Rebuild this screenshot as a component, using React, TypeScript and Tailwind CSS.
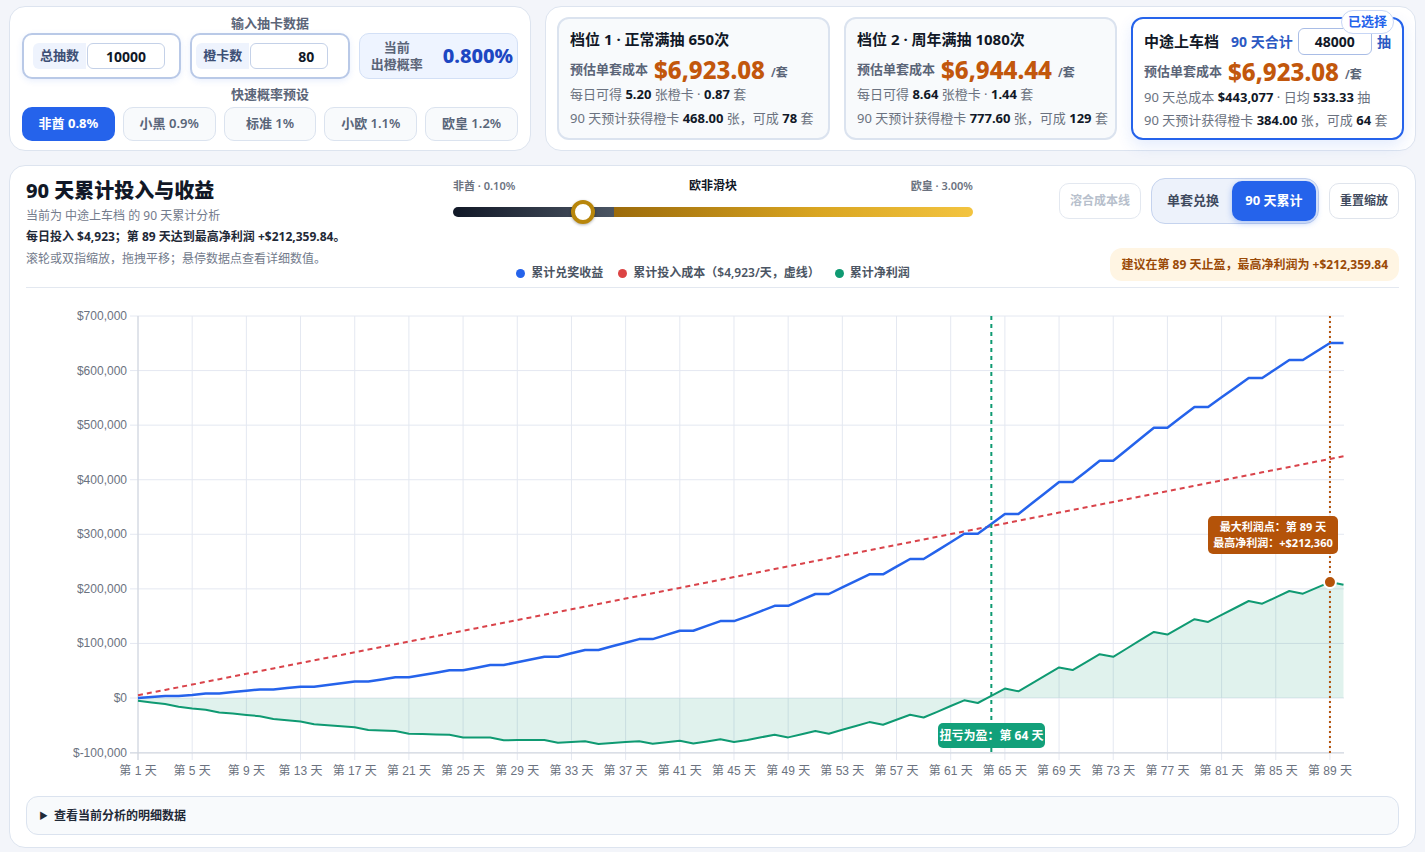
import React from 'react'

const DAILY = 4923

// revenue (k$) by completed sets, read off the curve
const TABLE: [number, number][] = [
  [0, 0], [3, 5.5], [6, 13.4], [9, 20.7], [12, 30], [14, 37.9], [17, 50.7], [19, 60.5],
  [22, 75.7], [24, 88], [27, 108], [29, 123.4], [32, 149.6], [34, 169], [36, 190.6],
  [39, 226.6], [41, 254.7], [44, 301], [46, 337.2], [49, 395.8], [51, 434.8], [54, 495.3],
  [56, 533.3], [59, 586.4], [61, 619.4], [63, 650.50784],
]

function revenueForSets(n: number) {
  for (let i = 1; i < TABLE.length; i++) {
    const [n1, v1] = TABLE[i]
    const [n0, v0] = TABLE[i - 1]
    if (n <= n1) return (v0 + ((n - n0) / (n1 - n0)) * (v1 - v0)) * 1000
  }
  return TABLE[TABLE.length - 1][1] * 1000
}

const points = Array.from({ length: 90 }, (_, i) => {
  const d = i + 1
  const sets = Math.floor((d * 533.33 * 0.008) / 6)
  const rev = revenueForSets(sets)
  const cost = DAILY * d
  return { d, rev, cost, net: rev - cost }
})

const X = (d: number) => 137 + (d - 1) * 13.545
const Y = (v: number) => 698 - v * 0.0005457

const path = (key: 'rev' | 'cost' | 'net') =>
  points.map((p, i) => `${i ? 'L' : 'M'}${X(p.d).toFixed(1)},${Y(p[key]).toFixed(1)}`).join('')

const AXIS_FONT = 'Liberation Sans, Noto Sans CJK SC, sans-serif'
const UI_FONT = 'Noto Sans, Noto Sans CJK SC, sans-serif'

function Chart() {
  const yTicks = [-100000, 0, 100000, 200000, 300000, 400000, 500000, 600000, 700000]
  const xTicks = Array.from({ length: 23 }, (_, i) => 1 + i * 4)
  const fill = `M${X(1)},${Y(0)}` + path('net').replace(/^M/, 'L') + `L${X(90)},${Y(0)}Z`
  return (
    <svg width={1374} height={498} viewBox="25 288 1374 498" className="block">
      {yTicks.map((v) => (
        <g key={v}>
          <line x1={129} x2={1343} y1={Y(v)} y2={Y(v)} stroke="#e4e8f1" strokeWidth={1} />
          <text x={126} y={Y(v) + 4} textAnchor="end" fontSize={12} fill="#6b7280" fontFamily={AXIS_FONT}>
            {v < 0 ? '$-100,000' : '$' + v.toLocaleString('en-US')}
          </text>
        </g>
      ))}
      {xTicks.map((d) => (
        <g key={d}>
          <line x1={X(d)} x2={X(d)} y1={316} y2={760} stroke="#e4e8f1" strokeWidth={1} />
          <text x={X(d)} y={775} textAnchor="middle" fontSize={12} fill="#6b7280" fontFamily={AXIS_FONT}>
            {`第 ${d} 天`}
          </text>
        </g>
      ))}
      <line x1={137} x2={137} y1={316} y2={760} stroke="#cfd4dc" strokeWidth={1} />
      <line x1={129} x2={1343} y1={753} y2={753} stroke="#cfd4dc" strokeWidth={1} />

      <path d={fill} fill="rgba(16,155,115,0.13)" />
      <path d={path('cost')} fill="none" stroke="#d9434a" strokeWidth={2} strokeDasharray="5 4" />
      <path d={path('net')} fill="none" stroke="#0f9a72" strokeWidth={2} strokeLinejoin="round" />
      <path d={path('rev')} fill="none" stroke="#2563eb" strokeWidth={2.5} strokeLinejoin="round" />

      <line x1={X(64)} x2={X(64)} y1={316} y2={753} stroke="#0f9a72" strokeWidth={2} strokeDasharray="4 4" />
      <line x1={X(89)} x2={X(89)} y1={316} y2={753} stroke="#b45309" strokeWidth={2} strokeDasharray="2 3" />

      <rect x={937} y={723} width={107} height={25} rx={5} fill="#12a07a" />
      <text x={990.5} y={740} textAnchor="middle" fontSize={12} fontWeight={700} fill="#fff" fontFamily={UI_FONT}>
        扭亏为盈：第 64 天
      </text>

      <rect x={1207} y={516} width={130} height={38} rx={5} fill="#b45309" />
      <text x={1272} y={531} textAnchor="middle" fontSize={11} fontWeight={700} fill="#fff" fontFamily={UI_FONT}>
        最大利润点：第 89 天
      </text>
      <text x={1272} y={547} textAnchor="middle" fontSize={11} fontWeight={700} fill="#fff" fontFamily={UI_FONT}>
        最高净利润：+$212,360
      </text>
      <circle cx={X(89)} cy={Y(212360)} r={6} fill="#b45309" stroke="#fff" strokeWidth={2} />
    </svg>
  )
}

function InputBox({ label, value, pad, textPad }: { label: string; value: string; pad: string; textPad: string }) {
  return (
    <div className={`flex h-[46px] items-center rounded-[10px] border-2 border-[#b9c9e7] bg-white shadow-[0_2px_6px_rgba(37,99,235,0.10)] ${pad}`}>
      <div className="flex h-[26px] w-[53px] items-center justify-center rounded-l-md bg-[#eef3fd] text-[13px] font-semibold text-[#3d4f75]">
        {label}
      </div>
      <div className={`ml-px flex h-[26px] w-[78px] items-center justify-center rounded-md border border-[#c4d1e8] bg-white text-[14px] font-bold text-[#111827] ${textPad}`}>
        {value}
      </div>
    </div>
  )
}

function InputCard() {
  const presets = ['非酋 0.8%', '小黑 0.9%', '标准 1%', '小欧 1.1%', '欧皇 1.2%']
  return (
    <div className="h-[145px] w-[522px] shrink-0 rounded-2xl border border-[#dde4ef] bg-white px-3 pt-2">
      <div className="text-center text-[13px] font-semibold leading-4 text-[#5b6578]">输入抽卡数据</div>
      <div className="mt-[2px] grid grid-cols-3 gap-[9px]">
        <InputBox label="总抽数" value="10000" pad="pl-[9px]" textPad="" />
        <InputBox label="橙卡数" value="80" pad="pl-[4px]" textPad="pl-[34px]" />
        <div className="flex h-[46px] items-center gap-[20px] whitespace-nowrap rounded-[10px] border border-[#d3e0f6] bg-[#eef4ff] pl-[11px]">
          <div className="text-center text-[13px] font-semibold leading-[17px] text-[#5b6578]">
            当前
            <br />
            出橙概率
          </div>
          <div className="text-[20px] font-extrabold text-[#1d47c2]">0.800%</div>
        </div>
      </div>
      <div className="mt-[7px] text-center text-[13px] font-semibold leading-4 text-[#5b6578]">快速概率预设</div>
      <div className="mt-[5px] grid grid-cols-5 gap-2">
        {presets.map((p, i) => (
          <div
            key={p}
            className={
              i === 0
                ? 'flex h-[34px] items-center justify-center rounded-[10px] bg-[#2563eb] text-[13px] font-bold text-white'
                : 'flex h-[34px] items-center justify-center rounded-[10px] border border-[#dbe3ef] bg-[#f8fafc] text-[13px] font-semibold text-[#596579]'
            }
          >
            {p}
          </div>
        ))}
      </div>
    </div>
  )
}

function CostRow({ value }: { value: string }) {
  return (
    <div className="flex h-[28px] items-center gap-[6px] whitespace-nowrap">
      <span className="text-[13px] font-semibold text-[#5b6578]">预估单套成本</span>
      <span className="text-[24px] font-extrabold leading-[28px] text-[#c2570c]">{value}</span>
      <span className="mt-[6px] text-[12px] font-semibold text-[#5b6578]">/套</span>
    </div>
  )
}

function B({ children }: { children: React.ReactNode }) {
  return <b className="font-bold text-[#111827]">{children}</b>
}

function TierCard({ title, cost, daily, sets, cards, suits }: { title: string; cost: string; daily: string; sets: string; cards: string; suits: string }) {
  return (
    <div className="h-[123px] rounded-xl border-2 border-[#dbe3ef] bg-[#f8fafc] px-[11px] pt-[9px]">
      <div className="whitespace-nowrap text-[15px] font-bold leading-[22px] text-[#111827]">{title}</div>
      <div className="mt-[6px]">
        <CostRow value={cost} />
      </div>
      <div className="whitespace-nowrap text-[13px] leading-[20px] text-[#6b7280]">
        每日可得 <B>{daily}</B> 张橙卡 · <B>{sets}</B> 套
      </div>
      <div className="mt-[4px] whitespace-nowrap text-[13px] leading-[20px] text-[#6b7280]">
        90 天预计获得橙卡 <B>{cards}</B> 张，可成 <B>{suits}</B> 套
      </div>
    </div>
  )
}

function TierPanel() {
  return (
    <div className="grid h-[145px] flex-1 grid-cols-3 gap-[14px] rounded-2xl border border-[#dde4ef] bg-white px-[11px] pt-[10px]">
      <TierCard title="档位 1 · 正常满抽 650次" cost="$6,923.08" daily="5.20" sets="0.87" cards="468.00" suits="78" />
      <TierCard title="档位 2 · 周年满抽 1080次" cost="$6,944.44" daily="8.64" sets="1.44" cards="777.60" suits="129" />
      <div className="relative h-[123px] rounded-xl border-2 border-[#2563eb] bg-white px-[11px] pt-[9px] shadow-[0_6px_16px_rgba(37,99,235,0.12)]">
        <div className="absolute -top-[9px] right-[8px] flex h-[24px] items-center rounded-full border border-[#c7d6f6] bg-white px-[6px] text-[13px] font-bold text-[#2563eb]">
          已选择
        </div>
        <div className="flex h-[27px] items-center whitespace-nowrap">
          <span className="text-[15px] font-bold text-[#111827]">中途上车档</span>
          <span className="ml-[12px] text-[14px] font-bold text-[#2b59c3]">90 天合计</span>
          <div className="ml-[5px] flex h-[27px] w-[75px] items-center justify-center rounded-md border border-[#a9bde6] bg-white text-[14px] font-bold text-[#111827]">
            48000
          </div>
          <span className="ml-[5px] text-[14px] font-bold text-[#2b59c3]">抽</span>
        </div>
        <div className="mt-[3px]">
          <CostRow value="$6,923.08" />
        </div>
        <div className="mt-[1px] whitespace-nowrap text-[13px] leading-[20px] text-[#6b7280]">
          90 天总成本 <B>$443,077</B> · 日均 <B>533.33</B> 抽
        </div>
        <div className="mt-[3px] whitespace-nowrap text-[13px] leading-[20px] text-[#6b7280]">
          90 天预计获得橙卡 <B>384.00</B> 张，可成 <B>64</B> 套
        </div>
      </div>
    </div>
  )
}

function LegendItem({ color, label }: { color: string; label: string }) {
  return (
    <div className="flex items-center gap-[6px]">
      <span className={`h-[9px] w-[9px] rounded-full ${color}`} />
      <span className="text-[12px] font-semibold leading-4 text-[#4b5563]">{label}</span>
    </div>
  )
}

function Header() {
  return (
    <div className="flex items-start">
      <div className="w-[427px] shrink-0">
        <h1 className="text-[20px] font-extrabold leading-[28px] text-[#111827]">90 天累计投入与收益</h1>
        <p className="mt-[2px] text-[12px] leading-[18px] text-[#737b8c]">当前为 中途上车档 的 90 天累计分析</p>
        <p className="mt-[3px] text-[12px] font-bold leading-[18px] text-[#1f2937]">
          每日投入 $4,923；第 89 天达到最高净利润 +$212,359.84。
        </p>
        <p className="mt-[4px] text-[12px] leading-[18px] text-[#737b8c]">滚轮或双指缩放，拖拽平移；悬停数据点查看详细数值。</p>
      </div>

      <div className="mt-[1px] w-[520px] shrink-0">
        <div className="flex h-4 items-center justify-between">
          <span className="text-[11px] font-semibold text-[#6b7280]">非酋 · 0.10%</span>
          <span className="text-[12px] font-bold text-[#111827]">欧非滑块</span>
          <span className="text-[11px] font-semibold text-[#6b7280]">欧皇 · 3.00%</span>
        </div>
        <div className="relative mt-[13px] h-[10px] rounded-full bg-[linear-gradient(90deg,#111827_0%,#4b5563_31%,#9c6b0b_31%,#d9a521_70%,#f3c440_100%)]">
          <div className="absolute left-[118px] -top-[7px] h-[24px] w-[24px] rounded-full border-[4px] border-[#b8860b] bg-white shadow-[0_1px_3px_rgba(0,0,0,0.3)]" />
        </div>
        <div className="mt-[48px] flex items-center justify-center gap-[15px]">
          <LegendItem color="bg-[#2563eb]" label="累计兑奖收益" />
          <LegendItem color="bg-[#dc4444]" label="累计投入成本（$4,923/天，虚线）" />
          <LegendItem color="bg-[#0f9a72]" label="累计净利润" />
        </div>
      </div>

      <div className="ml-auto mt-[1px] flex flex-col items-end">
        <div className="flex items-center gap-[10px]">
          <div className="flex h-[36px] items-center rounded-[10px] border border-[#e3e8f0] bg-white px-[10px] text-[12px] font-semibold text-[#b7bfcc]">
            溶合成本线
          </div>
          <div className="flex h-[46px] items-center rounded-[14px] border border-[#c5d3ee] bg-[#edf2fb] p-[2px]">
            <div className="flex h-[40px] w-[78px] items-center justify-center text-[13px] font-bold text-[#3f4a5e]">单套兑换</div>
            <div className="flex h-[40px] w-[84px] items-center justify-center rounded-[10px] bg-[#2563eb] text-[13px] font-bold text-white shadow-[0_2px_6px_rgba(37,99,235,0.35)]">
              90 天累计
            </div>
          </div>
          <div className="flex h-[36px] items-center rounded-[10px] border border-[#dfe4ec] bg-white px-[10px] text-[12px] font-semibold text-[#3f4a5e]">
            重置缩放
          </div>
        </div>
        <div className="mt-[24px] flex h-[33px] items-center rounded-xl bg-[#fff5e3] px-[11px] text-[12px] font-bold text-[#9a4a07]">
          建议在第 89 天止盈，最高净利润为 +$212,359.84
        </div>
      </div>
    </div>
  )
}

export default function App() {
  return (
    <div className="min-h-screen bg-[#f3f5fa] px-[9px] pt-[6px] pb-1 font-['Noto_Sans','Noto_Sans_CJK_SC',sans-serif]">
      <div className="flex gap-[14px]">
        <InputCard />
        <TierPanel />
      </div>
      <div className="mt-[14px] rounded-2xl border border-[#dde4ef] bg-white px-4 pt-[11px] pb-[12px]">
        <Header />
        <div className="mt-[6px] border-t border-[#e3e8f0]" />
        <Chart />
        <div className="mt-[10px] flex h-[39px] items-center rounded-xl border border-[#dbe3ef] bg-[#f8fafc] px-[12px] text-[12px] font-bold text-[#1f2937]">
          <span className="mr-[6px] text-[9px]">▶</span>
          查看当前分析的明细数据
        </div>
      </div>
    </div>
  )
}
